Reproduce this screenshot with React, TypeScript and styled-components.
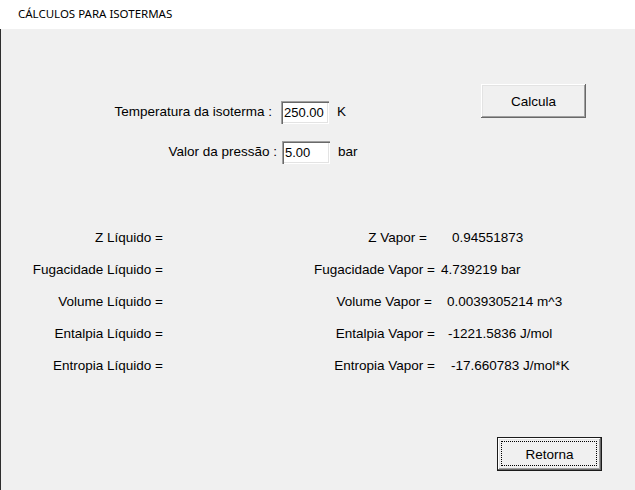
import styled, { createGlobalStyle } from 'styled-components';

const GlobalStyle = createGlobalStyle`
  html, body {
    margin: 0;
    padding: 0;
    background: #f0f0f0;
  }
  * {
    box-sizing: border-box;
  }
`;

const Window = styled.div`
  width: 635px;
  height: 490px;
  display: flex;
  flex-direction: column;
  background: #f0f0f0;
  font-family: "Liberation Sans", Arial, sans-serif;
  font-size: 13.5px;
  color: #000;
  overflow: hidden;
`;

const TitleBar = styled.div`
  height: 29px;
  flex-shrink: 0;
  background: #fff;
  padding: 6px 0 0 18px;
  font-family: "Noto Sans", "Open Sans", sans-serif;
  font-size: 11.5px;
  line-height: 15px;
  color: #000;
`;

const Body = styled.div`
  flex: 1;
  display: flex;
  flex-direction: column;
  border-left: 1px solid #2e2e2e;
`;

const TopSection = styled.div`
  display: flex;
  align-items: flex-start;
  padding-top: 55px;
  padding-right: 49px;
`;

const Form = styled.div`
  display: flex;
  flex-direction: column;
  gap: 17px;
  padding-top: 17px;
`;

const FormRow = styled.div`
  display: flex;
  align-items: center;
  height: 23px;
  line-height: 20px;
`;

const FieldLabel = styled.span<{ $end: number; $gap: number }>`
  width: ${p => p.$end - 1}px;
  margin-right: ${p => p.$gap}px;
  text-align: right;
  white-space: nowrap;
  margin-bottom: 2px;
`;

const Field = styled.input`
  width: 48px;
  height: 23px;
  border: none;
  margin: 0;
  padding: 0 0 0 3px;
  background: #fff;
  font-family: "Liberation Sans", Arial, sans-serif;
  font-size: 13px;
  color: #000;
  outline: none;
  box-shadow:
    inset 1px 1px #a0a0a0,
    inset 2px 2px #696969,
    inset -1px -1px #ffffff,
    inset -2px -2px #e3e3e3;
`;

const Unit = styled.span`
  margin-left: 8px;
  margin-bottom: 2px;
`;

const Button = styled.button<{ $default?: boolean }>`
  position: relative;
  width: 105px;
  height: 34px;
  margin: 0;
  padding: 0;
  background: #f0f0f0;
  font-family: "Liberation Sans", Arial, sans-serif;
  font-size: 13.5px;
  color: #000;
  cursor: pointer;
  border: ${p => (p.$default ? '1px solid #1a1a1a' : 'none')};
  box-shadow:
    inset -1px -1px #696969,
    inset 1px 1px #ffffff,
    inset -2px -2px #a0a0a0,
    inset 2px 2px #e3e3e3;

  &::after {
    content: '';
    display: ${p => (p.$default ? 'block' : 'none')};
    position: absolute;
    inset: 3px 4px 4px 3px;
    border: 1px dotted #000;
  }
`;

const CalcButton = styled(Button)`
  margin-left: auto;
`;

const Results = styled.div`
  display: grid;
  grid-template-columns: 162px 272px 1fr;
  grid-auto-rows: 32px;
  align-items: center;
  margin-top: 57px;
`;

const LeftLabel = styled.span`
  text-align: right;
  white-space: nowrap;
`;

const RightLabel = styled.span<{ $shift: number }>`
  text-align: right;
  white-space: nowrap;
  padding-right: ${p => p.$shift}px;
`;

const Value = styled.span<{ $x: number }>`
  white-space: nowrap;
  padding-left: ${p => p.$x}px;
`;

const Footer = styled.div`
  display: flex;
  justify-content: flex-end;
  padding-right: 33px;
  margin-top: 56px;
`;

const rows = [
  { left: 'Z Líquido =', right: 'Z Vapor =', shift: 8, value: '0.94551873', x: 17 },
  { left: 'Fugacidade Líquido =', right: 'Fugacidade Vapor =', shift: 0, value: '4.739219 bar', x: 6 },
  { left: 'Volume Líquido =', right: 'Volume Vapor =', shift: 3, value: '0.0039305214 m^3', x: 12 },
  { left: 'Entalpia Líquido =', right: 'Entalpia Vapor =', shift: 0, value: '-1221.5836 J/mol', x: 13 },
  { left: 'Entropia Líquido =', right: 'Entropia Vapor =', shift: 0, value: '-17.660783 J/mol*K', x: 16 },
];

const App = () => {
  return (
    <>
      <GlobalStyle />
      <Window>
        <TitleBar>CÁLCULOS PARA ISOTERMAS</TitleBar>
        <Body>
          <TopSection>
            <Form>
              <FormRow>
                <FieldLabel $end={272} $gap={9}>Temperatura da isoterma :</FieldLabel>
                <Field defaultValue="250.00" />
                <Unit>K</Unit>
              </FormRow>
              <FormRow>
                <FieldLabel $end={277} $gap={5}>Valor da pressão :</FieldLabel>
                <Field defaultValue="5.00" />
                <Unit>bar</Unit>
              </FormRow>
            </Form>
            <CalcButton>Calcula</CalcButton>
          </TopSection>

          <Results>
            {rows.map(r => (
              <>
                <LeftLabel key={r.left}>{r.left}</LeftLabel>
                <RightLabel key={r.right} $shift={r.shift}>{r.right}</RightLabel>
                <Value key={r.value} $x={r.x}>{r.value}</Value>
              </>
            ))}
          </Results>

          <Footer>
            <Button $default>Retorna</Button>
          </Footer>
        </Body>
      </Window>
    </>
  );
};

export default App;
